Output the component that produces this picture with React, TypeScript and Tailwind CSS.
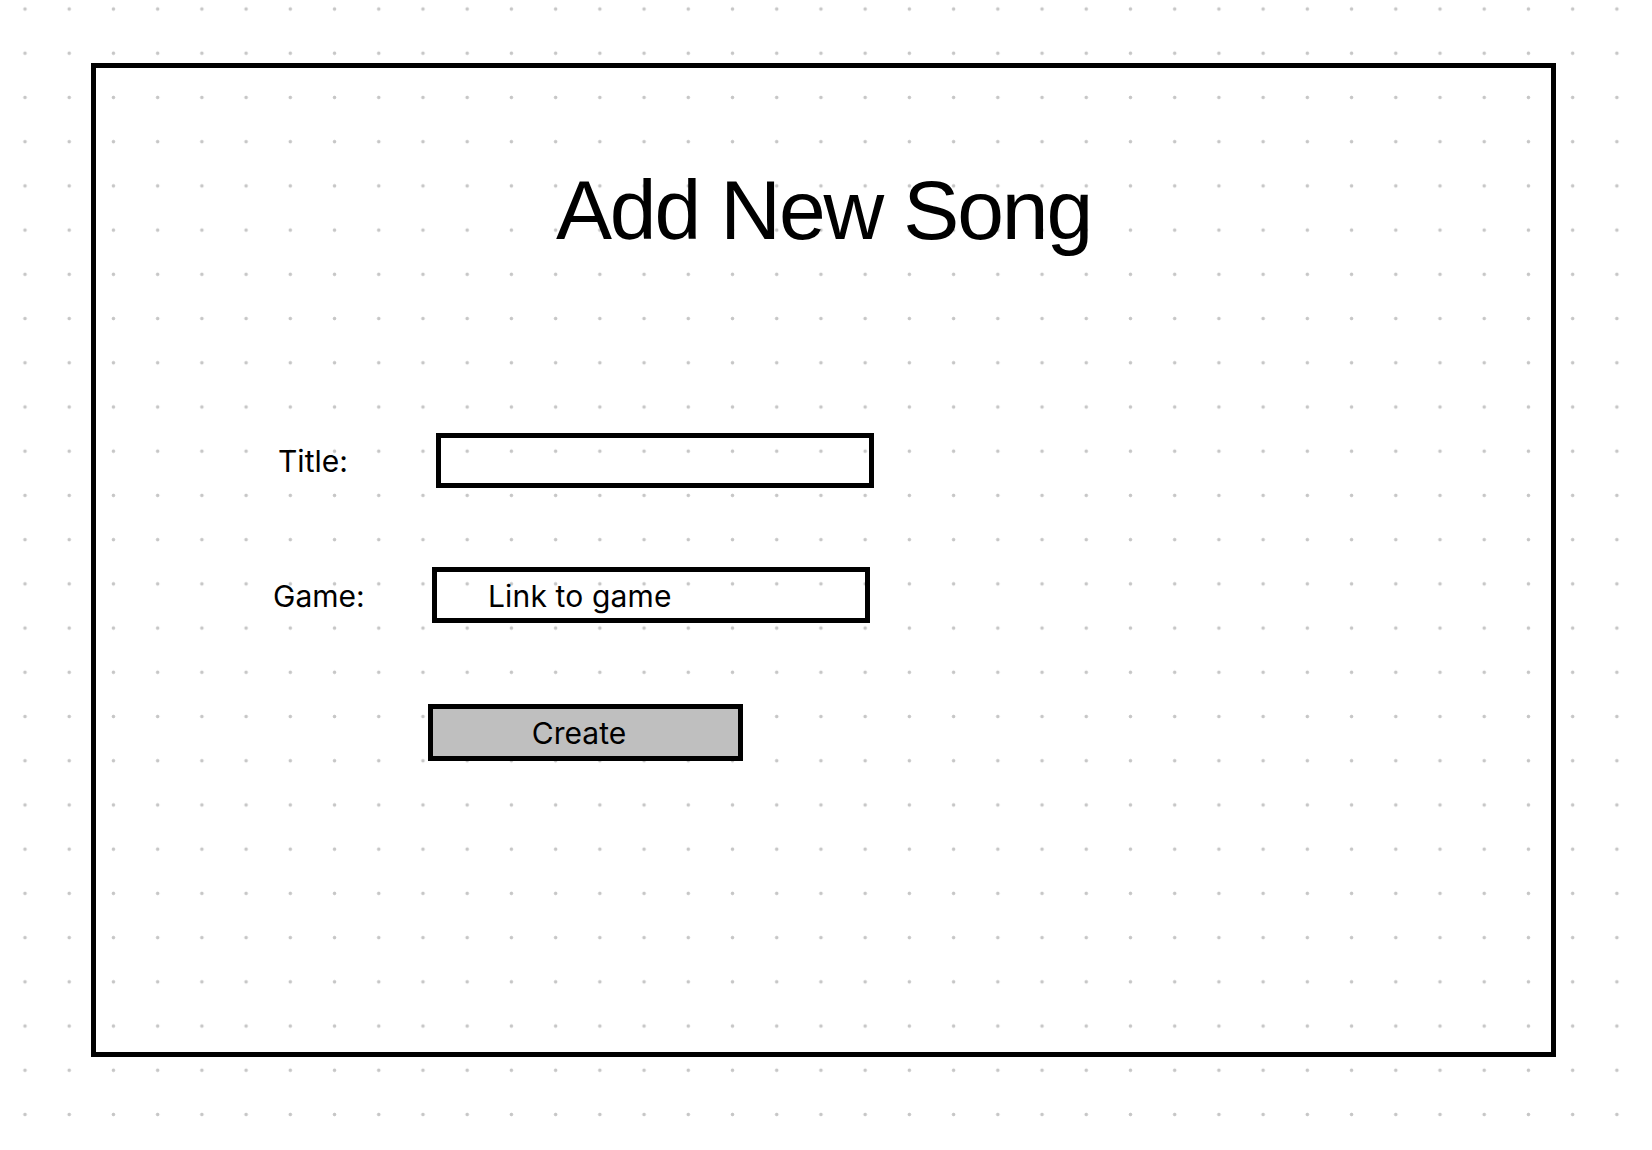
import React from 'react';

const heading = { fontFamily: '"Liberation Sans", Arial, sans-serif' };
const body = { fontFamily: 'Inter, "Liberation Sans", Arial, sans-serif' };

export default function App() {
  return (
    <div
      className="min-h-screen w-full bg-white pt-[63px] pl-[91px] bg-[radial-gradient(circle,#c6c6c6_1.3px,transparent_2.2px)] bg-[length:44.23px_44.23px] bg-[position:2.9px_-13.1px] text-black"
      style={body}
    >
      <div className="w-[1465px] h-[994px] border-[5px] border-black">
        <h1
          className="mt-[100px] text-center text-[84px] leading-none font-normal tracking-[-0.025em]"
          style={heading}
        >
          Add New Song
        </h1>

        <div className="mt-[181px] ml-[182px] flex items-center">
          <label className="w-[158px] text-[30px] leading-[30px]">Title:</label>
          <div className="w-[438px] h-[55px] border-[5px] border-black" />
        </div>

        <div className="mt-[79px] ml-[177px] flex items-center">
          <label className="w-[159px] mt-[2px] text-[30px] leading-[30px]">Game:</label>
          <div className="w-[438px] h-[56px] border-[5px] border-black flex items-center pl-[51px]">
            <span className="mt-[2px] text-[30px] leading-[30px] tracking-[0.005em]">Link to game</span>
          </div>
        </div>

        <div className="mt-[81px] ml-[332px]">
          <button
            type="button"
            className="w-[315px] h-[57px] border-[5px] border-black bg-[#bfbfbf] text-[30px] leading-[30px] text-center pr-[13px]"
          >
            Create
          </button>
        </div>
      </div>
    </div>
  );
}
